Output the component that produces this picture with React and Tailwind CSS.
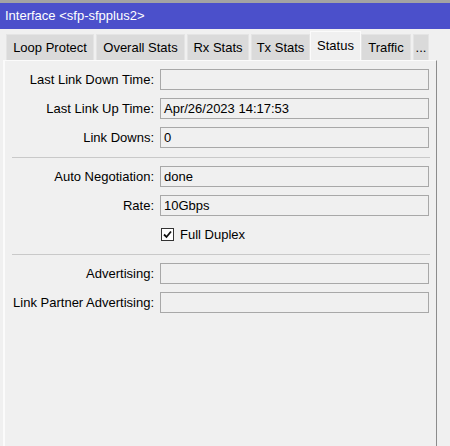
import React from 'react';

const tabs = [
  { label: 'Loop Protect', w: 'w-[88px]' },
  { label: 'Overall Stats', w: 'w-[89px]' },
  { label: 'Rx Stats', w: 'w-[62px]' },
  { label: 'Tx Stats', w: 'w-[59px]' },
  { label: 'Status', w: 'w-[51px]', active: true },
  { label: 'Traffic', w: 'w-[50px]' },
  { label: '...', w: 'w-[16px]' },
];

const Field = ({ label, value }) => (
  <div className="flex items-center h-[21px]">
    <span className="w-[150px] text-right pr-[1px] whitespace-nowrap">{label}</span>
    <div className="ml-[5px] w-[269px] h-[21px] border border-[#a8a8a8] bg-[#f0f0f0] px-[3px] flex items-center whitespace-nowrap">
      {value}
    </div>
  </div>
);

const Separator = () => <div className="ml-[7px] w-[418px] h-px bg-[#c9c9c9] mt-[9px] mb-[8px]" />;

export default function App() {
  return (
    <div
      className="w-[450px] h-[446px] bg-[#f0f0f0] flex flex-col text-[13px] text-black overflow-hidden"
      style={{ fontFamily: '"Liberation Sans", Arial, sans-serif' }}
    >
      {/* window frame + title */}
      <div className="h-[3px] bg-[#a3a3a3]" />
      <div className="h-[26px] bg-[#4b50cb] text-white flex items-center px-[5px]">
        Interface &lt;sfp-sfpplus2&gt;
      </div>

      {/* tab strip */}
      <div className="flex items-end gap-[2px] pl-[6px] h-[31px]">
        {tabs.map((t) =>
          t.active ? (
            <div
              key={t.label}
              className={`${t.w} h-[29px] -mx-[2px] bg-[#f0f0f0] border border-b-0 border-[#fbfbfb] flex items-start justify-center pt-[4px] z-10`}
            >
              {t.label}
            </div>
          ) : (
            <div
              key={t.label}
              className={`${t.w} h-[26px] bg-[#dadada] border border-b-0 border-[#e4e4e4] flex items-center justify-center`}
            >
              {t.label}
            </div>
          )
        )}
      </div>

      {/* status panel */}
      <div className="ml-[3px] w-[434px] flex-1 border-l-2 border-t border-r border-l-[#fbfbfb] border-t-[#fbfbfb] border-r-[#8c8c8c] pt-[8px]">
        <div className="flex flex-col gap-[8px]">
          <Field label="Last Link Down Time:" value="" />
          <Field label="Last Link Up Time:" value="Apr/26/2023 14:17:53" />
          <Field label="Link Downs:" value="0" />
        </div>
        <Separator />
        <div className="flex flex-col gap-[8px]">
          <Field label="Auto Negotiation:" value="done" />
          <Field label="Rate:" value="10Gbps" />
          <div className="flex items-center h-[21px]">
            <div className="ml-[156px] w-[13px] h-[13px] border border-[#333] bg-white flex items-center justify-center">
              <svg width="9" height="9" viewBox="0 0 9 9">
                <path d="M1 4.5 L3.5 7 L8 1.5" fill="none" stroke="#111" strokeWidth="1.8" />
              </svg>
            </div>
            <span className="ml-[6px]">Full Duplex</span>
          </div>
        </div>
        <Separator />
        <div className="flex flex-col gap-[8px]">
          <Field label="Advertising:" value="" />
          <Field label="Link Partner Advertising:" value="" />
        </div>
      </div>
    </div>
  );
}
